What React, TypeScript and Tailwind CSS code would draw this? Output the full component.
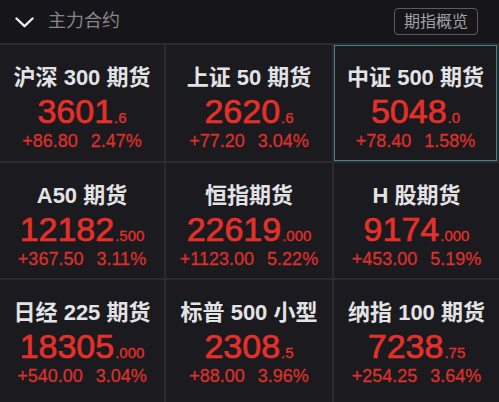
type Quote = {
  name: string
  int: string
  frac: string
  change: string
  pct: string
  active?: boolean
}

const QUOTES: Quote[] = [
  { name: '沪深 300 期货', int: '3601', frac: '.6', change: '+86.80', pct: '2.47%' },
  { name: '上证 50 期货', int: '2620', frac: '.6', change: '+77.20', pct: '3.04%' },
  { name: '中证 500 期货', int: '5048', frac: '.0', change: '+78.40', pct: '1.58%', active: true },
  { name: 'A50 期货', int: '12182', frac: '.500', change: '+367.50', pct: '3.11%' },
  { name: '恒指期货', int: '22619', frac: '.000', change: '+1123.00', pct: '5.22%' },
  { name: 'H 股期货', int: '9174', frac: '.000', change: '+453.00', pct: '5.19%' },
  { name: '日经 225 期货', int: '18305', frac: '.000', change: '+540.00', pct: '3.04%' },
  { name: '标普 500 小型', int: '2308', frac: '.5', change: '+88.00', pct: '3.96%' },
  { name: '纳指 100 期货', int: '7238', frac: '.75', change: '+254.25', pct: '3.64%' },
]

function QuoteCell({ q }: { q: Quote }) {
  return (
    <div
      className={`flex flex-col items-center bg-[#1b1a1f] ${
        q.active ? 'border-[1.5px] border-[#3f858d] pt-[18.5px] mr-[2px]' : 'pt-[20px]'
      }`}
    >
      <div className="text-[22px] leading-[26px] text-[#e3e3e5] font-semibold whitespace-nowrap">{q.name}</div>
      <div className="mt-[3px] flex items-baseline text-[#e5302a] leading-[34px] [-webkit-text-stroke:0.7px_#e5302a]">
        <span className="text-[34px]">{q.int}</span>
        <span className="text-[15px] ml-[1px] [-webkit-text-stroke:0.3px_#e5302a]">{q.frac}</span>
      </div>
      <div className="mt-[-5px] flex gap-[13px] text-[18px] leading-[22px] text-[#dc302b] [-webkit-text-stroke:0.3px_#dc302b]">
        <span>{q.change}</span>
        <span>{q.pct}</span>
      </div>
    </div>
  )
}

export default function App() {
  return (
    <div
      className="w-[499px] h-[402px] overflow-hidden bg-[#1b1a1f] flex flex-col"
      style={{ fontFamily: '"Liberation Sans", "Noto Sans CJK SC", sans-serif' }}
    >
      <div className="h-[43px] shrink-0 flex items-center bg-[#161519] pl-[15px] pr-[21px]">
        <svg width="19" height="11" viewBox="0 0 19 11" fill="none" className="mt-[1px]">
          <polyline points="1.5,1.5 9.5,9.2 17.5,1.5" stroke="#ececee" strokeWidth="2.4" strokeLinecap="round" strokeLinejoin="round" />
        </svg>
        <span className="ml-[14px] text-[18px] text-[#86858a]">主力合约</span>
        <div className="ml-auto h-[27px] px-[9px] flex items-center rounded-[4px] border border-[#5c5b60] text-[16px] text-[#a3a2a7]">
          期指概览
        </div>
      </div>
      <div className="grid grid-cols-[164px_166px_165px] grid-rows-[116px_115px_124px] gap-[2px] bg-[#2b2a2f] pt-[2px]">
        {QUOTES.map((q) => (
          <QuoteCell key={q.name} q={q} />
        ))}
      </div>
    </div>
  )
}
